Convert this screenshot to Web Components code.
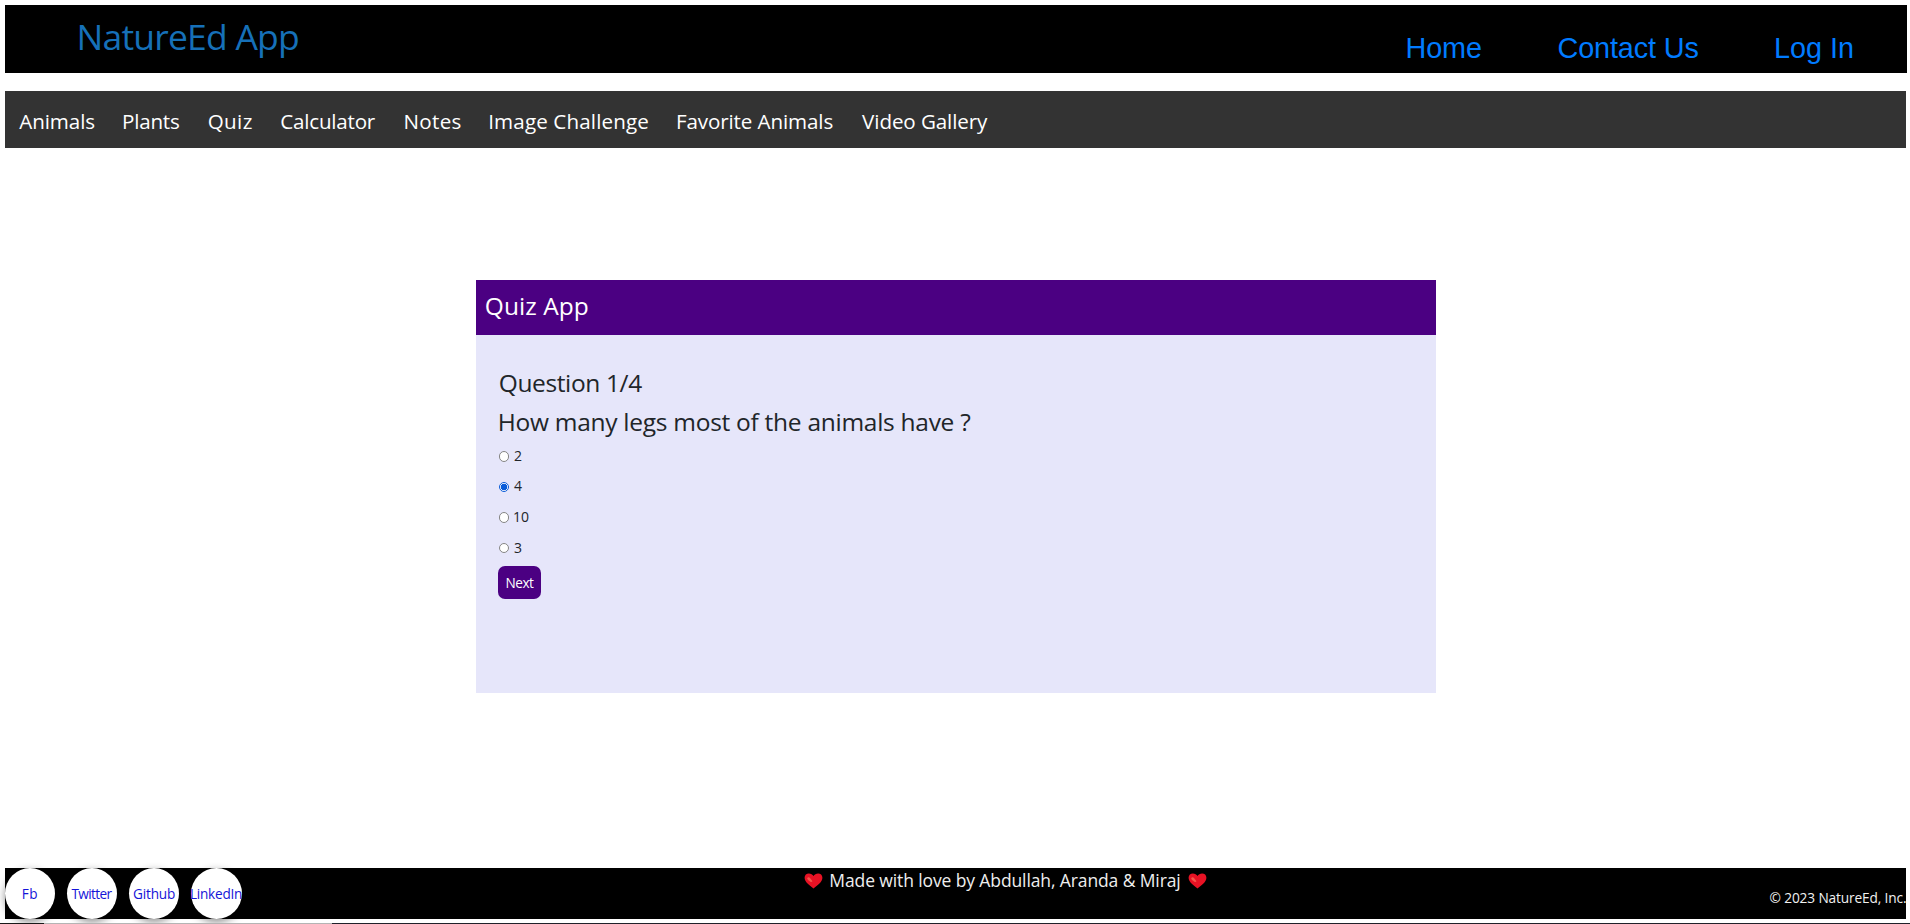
<!DOCTYPE html>
<html lang="en">
<head>
<meta charset="utf-8">
<title>NatureEd App</title>
<style>
html{height:100%;overflow:hidden;background:#fff}
body{margin:0;height:924px;overflow:hidden;font-family:"Open Sans","Noto Sans",sans-serif;color:#212529}
</style>
</head>
<body>
<nature-app></nature-app>
<script>
const define=(name,html,setup)=>customElements.define(name,class extends HTMLElement{
  connectedCallback(){
    if(this.shadowRoot)return;
    const t=document.createElement('template');
    t.innerHTML=html;
    this.attachShadow({mode:'open'}).append(t.content.cloneNode(true));
    if(setup)setup.call(this,this.shadowRoot);
  }
});

// Text run whose tracking is adjusted so its ink spans exactly the "w" attribute in pixels.
define('fit-text',`<style>:host{display:block;flex:none;white-space:pre}span{display:inline-block}</style><span><slot></slot></span>`,function(root){
  const cs=getComputedStyle(this),text=this.textContent,w=+this.getAttribute('w');
  const ctx=document.createElement('canvas').getContext('2d');
  ctx.font=`${cs.fontWeight} ${cs.fontSize} ${cs.fontFamily}`;
  const m=ctx.measureText(text),ink=m.actualBoundingBoxRight+m.actualBoundingBoxLeft;
  const span=root.querySelector('span');
  this.style.width=w+'px';
  span.style.marginLeft=m.actualBoundingBoxLeft+'px';
  if(text.length>1)span.style.letterSpacing=(w-ink)/(text.length-1)+'px';
});

define('site-header',`<style>
:host{display:flex;box-sizing:border-box;width:1902px;height:68px;background:#000;padding:0 54px 0 74.5px;justify-content:space-between}
.brand{color:#1670b8;font-size:35.5px;line-height:62px}
nav{display:flex;font:28.8px/40px "Liberation Sans",Arial,sans-serif;color:#007bff;padding-top:23px;gap:77.5px}
</style>
<fit-text class="brand" w="218.5">NatureEd App</fit-text>
<nav><fit-text w="73.5">Home</fit-text><fit-text w="140">Contact Us</fit-text><fit-text w="77">Log In</fit-text></nav>`);

define('site-nav',`<style>
:host{display:flex;box-sizing:border-box;width:1901px;height:57px;margin-top:18px;background:#333;color:#fff;padding-left:14.3px;gap:29.7px;font-size:20.6px;line-height:60px}
</style>
<fit-text w="75">Animals</fit-text><fit-text w="55">Plants</fit-text><fit-text w="43">Quiz</fit-text><fit-text w="94.5">Calculator</fit-text><fit-text w="55">Notes</fit-text><fit-text w="158">Image Challenge</fit-text><fit-text w="154.5">Favorite Animals</fit-text><fit-text w="126">Video Gallery</fit-text>`);

define('quiz-option',`<style>
:host{display:flex;align-items:center;height:30.6px;font-size:14px;line-height:20px;gap:5px}
i{box-sizing:border-box;width:10.5px;height:10.5px;border:1px solid #858585;border-radius:50%;background:#fff;flex:none;margin-top:1px}
:host([checked]) i{border-color:#0a5cd8;background:radial-gradient(circle,#0a5cd8 0 3px,#fff 3.6px)}
</style><i></i><slot></slot>`);

define('quiz-button',`<style>
:host{display:block}
button{display:block;box-sizing:border-box;width:43px;height:33px;border:0;border-radius:7px;background:#4b0082;color:#fff;font:13.6px/33px "Open Sans","Noto Sans",sans-serif;padding:0 0 0 8.5px;text-align:left}
</style><button><slot></slot></button>`);

define('quiz-card',`<style>
:host{display:block;width:960px;height:413px;margin:132px 0 0 471px;background:#e6e6fa}
header{height:55px;background:#4b0082;color:#fff;font-size:24.5px;line-height:52px;padding-left:9.8px}
section{padding:28px 0 0 22px}
h2{margin:0 0 0 1.7px;font-weight:400;font-size:24.5px;line-height:39px;height:39px}
.options{padding:0 0 0 .5px;height:125.5px;margin-top:-.5px}
</style>
<header><fit-text w="102">Quiz App</fit-text></header>
<section>
<h2><fit-text w="142.5">Question 1/4</fit-text></h2>
<h2><fit-text w="470.5">How many legs most of the animals have ?</fit-text></h2>
<div class="options">
<quiz-option><fit-text w="7.3">2</fit-text></quiz-option>
<quiz-option checked><fit-text w="7.6">4</fit-text></quiz-option>
<quiz-option><fit-text w="15">10</fit-text></quiz-option>
<quiz-option><fit-text w="7">3</fit-text></quiz-option>
</div>
<quiz-button><fit-text w="27.5">Next</fit-text></quiz-button>
</section>`);

define('social-link',`<style>
:host{display:flex;justify-content:center;min-width:50px;height:51px;border-radius:50%;background:#fff;color:#1414d8;font-size:13.6px;line-height:52px;box-shadow:0 3px 8px rgba(0,0,0,.45)}
</style><slot></slot>`);

define('heart-icon',`<style>:host{display:block;width:19px;height:16px}svg{display:block}</style>
<svg width="19" height="16" viewBox="0 0 19 16"><path d="M9.5 15.6C5.500 12.400.6 9 .6 4.800.6 2 2.500.500 4.900.500 6.900.500 8.600 1.500 9.500 3.100 10.400 1.500 12.100.500 14.100.500 16.500.500 18.400 2 18.400 4.800 18.400 9 13.500 12.400 9.500 15.600Z" fill="#e81224"/><path d="M3.200 5.800C3.200 4.200 4.700 3.800 5.800 4.800L8.500 8.200C7.500 9.600 5.500 9 3.200 5.800Z" fill="#f4574b"/></svg>`);

define('site-footer',`<style>
:host{display:flex;width:1901px;height:51px;margin-top:175px;background:#000;color:#eee}
.social{display:flex;gap:12px}
.made{display:flex;margin-left:561.5px;gap:7.8px;font-size:17.5px;line-height:24px}
heart-icon{margin-top:5px}
.copy{margin-left:auto;font-size:13.7px;line-height:59px;color:#f1f1f1}
</style>
<div class="social">
<social-link><fit-text w="14.5">Fb</fit-text></social-link>
<social-link><fit-text w="41">Twitter</fit-text></social-link>
<social-link><fit-text w="42">Github</fit-text></social-link>
<social-link><fit-text w="51">LinkedIn</fit-text></social-link>
</div>
<div class="made"><heart-icon></heart-icon><fit-text w="350">Made with love by Abdullah, Aranda &amp; Miraj</fit-text><heart-icon></heart-icon></div>
<fit-text class="copy" w="136.5">© 2023 NatureEd, Inc.</fit-text>`);

define('nature-app',`<style>
:host{display:flex;flex-direction:column;box-sizing:border-box;height:924px}
main{display:flex;flex-direction:column;align-items:flex-start;padding:5px 0 0 5px;flex:1}
.edge{height:1px;background:linear-gradient(90deg,#191919 0 44px,#b4b4b4 44px 332px,#20212a 332px)}
</style>
<main><site-header></site-header><site-nav></site-nav><quiz-card></quiz-card><site-footer></site-footer></main>
<div class="edge"></div>`);
</script>
</body>
</html>
